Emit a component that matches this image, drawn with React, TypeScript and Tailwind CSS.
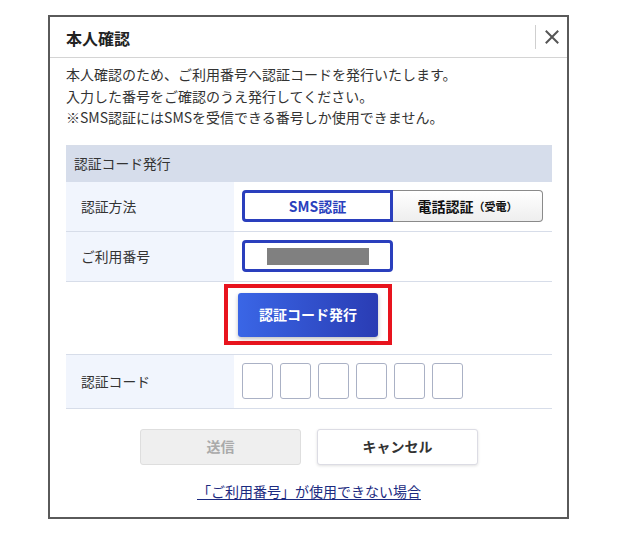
import React from "react";

const font = { fontFamily: '"Noto Sans CJK JP", "Noto Sans", sans-serif' };

function Row({ label, children, h, cls = "" }: { label?: string; children?: React.ReactNode; h: string; cls?: string }) {
  return (
    <div className={`flex border-b border-[#d7dde9] ${h}`}>
      <div className={`w-[168px] shrink-0 ${label ? "bg-[#f1f5fd]" : ""} flex items-center pl-[15px] text-[13.8px] text-[#333]`}>{label}</div>
      <div className={`flex-1 pl-2 ${cls}`}>{children}</div>
    </div>
  );
}

export default function App() {
  return (
    <div className="w-[635px] h-[546px] bg-white" style={font}>
      <div className="pt-[15px] pl-[48px]">
        <div className="w-[521px] h-[504px] border-2 border-[#5a5a5a] bg-white flex flex-col">
          {/* header */}
          <div className="h-[41px] border-b border-[#d4d4d4] flex items-center shrink-0">
            <div className="pl-[16px] text-[16px] font-bold text-[#222] leading-none flex-1 pt-[1px]">本人確認</div>
            <div className="w-px h-[24px] bg-[#cfcfcf]" />
            <div className="w-[31px] flex items-center justify-center">
              <svg width="14" height="14" viewBox="0 0 14 14">
                <path d="M1.5 1.5 L12.5 12.5 M12.5 1.5 L1.5 12.5" stroke="#555" strokeWidth="2" strokeLinecap="square" />
              </svg>
            </div>
          </div>
          {/* body */}
          <div className="pl-4 pr-[15px] pt-[6px] flex flex-col">
            <div className="text-[14px] leading-[21.5px] text-[#333] whitespace-nowrap">
              <div>本人確認のため、ご利用番号へ認証コードを発行いたします。</div>
              <div>入力した番号をご確認のうえ発行してください。</div>
              <div>※SMS認証にはSMSを受信できる番号しか使用できません。</div>
            </div>
            <div className="mt-[16px] border-t border-[#d7dde9]">
              <div className="h-[36px] bg-[#d6ddeb] flex items-center pl-2 text-[13.8px] text-[#333]">認証コード発行</div>
              <Row label="認証方法" h="h-[50px]" cls="flex items-center">
                <div className="flex h-[32px]">
                  <div className="w-[151px] h-full border-[3px] border-[#2a3fbd] rounded-l-[4px] flex items-center justify-center text-[14px] font-bold text-[#2a3fbd]">SMS認証</div>
                  <div className="w-[150px] h-full border border-l-0 border-[#8a8a8a] rounded-r-[4px] bg-linear-to-b from-white to-[#eeeeee] flex items-center justify-center text-[14px] font-bold text-[#111]">
                    電話認証<span className="text-[11px] font-bold">（受電）</span>
                  </div>
                </div>
              </Row>
              <Row label="ご利用番号" h="h-[50px]" cls="flex items-center">
                <div className="w-[151px] h-[32px] border-[3px] border-[#2a3fbd] rounded-[4px] flex items-center justify-center">
                  <div className="w-[102px] h-[17px] bg-[#808080]" />
                </div>
              </Row>
              <div className="flex h-[73px] border-b border-[#d7dde9]">
                <div className="w-[158px] shrink-0" />
                <div className="pt-[2px]">
                  <div className="border-[4px] border-[#e8141e] px-[10px] pt-[5px] pb-[4px] bg-white">
                    <div className="w-[140px] h-[44px] rounded-[3px] bg-linear-to-r from-[#3a66e6] to-[#2a3cb4] shadow-[0_2px_4px_rgba(0,0,0,0.25)] flex items-center justify-center text-white text-[14px] font-bold">
                      認証コード発行
                    </div>
                  </div>
                </div>
              </div>
              <Row label="認証コード" h="h-[54px]" cls="flex items-center gap-[7px]">
                {[0, 1, 2, 3, 4, 5].map((i) => (
                  <div key={i} className="w-[31px] h-[36px] border border-[#aab1c5] rounded-[3px] bg-white" />
                ))}
              </Row>
            </div>
            <div className="flex justify-center gap-[16px] mt-[20px]">
              <div className="w-[161px] h-[36px] rounded-[3px] bg-[#efefef] border border-[#dedede] flex items-center justify-center text-[14px] font-bold text-[#aaaaaa]">送信</div>
              <div className="w-[161px] h-[36px] rounded-[3px] bg-white border border-[#dcdce4] shadow-[0_1px_3px_rgba(0,0,0,0.12)] flex items-center justify-center text-[14px] font-bold text-[#333]">キャンセル</div>
            </div>
            <div className="flex justify-center mt-[16px]">
              <span className="text-[14px] leading-[20px] text-[#1b2a80] underline underline-offset-2">「ご利用番号」が使用できない場合</span>
            </div>
          </div>
        </div>
      </div>
    </div>
  );
}
